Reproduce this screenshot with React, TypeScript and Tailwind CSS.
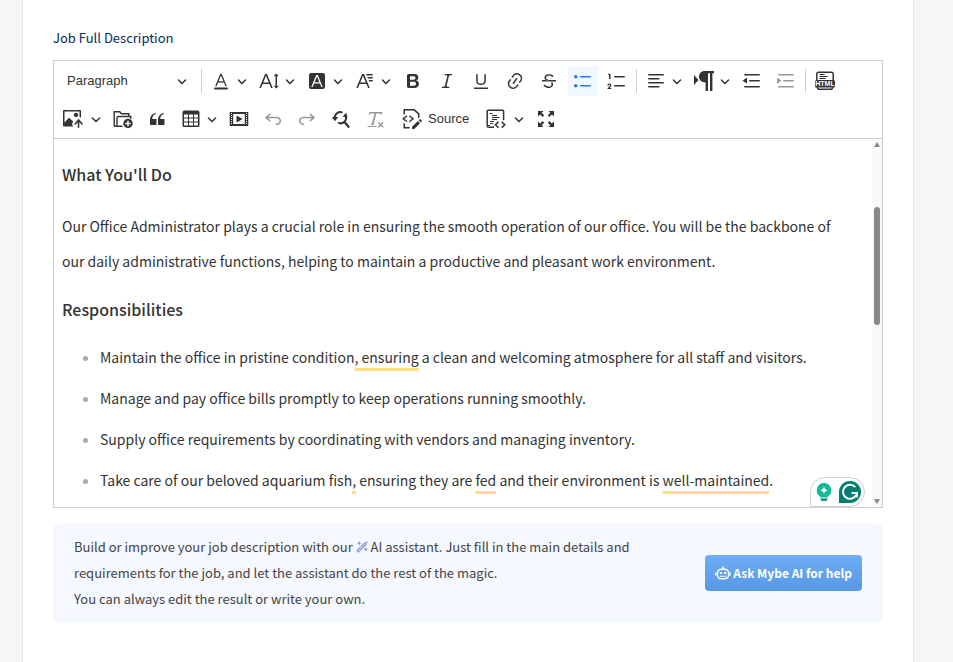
import type { ReactNode } from 'react';

const paths = {
  fontColor:
    'M12.4 10.3 10 4.5l-2.4 5.8h4.8zm.5 1.2H7.1L5.7 15H4.2l5-12h1.6l5 12h-1.5L13 11.5zm3.1 7H4a1 1 0 0 1 0-2h12a1 1 0 0 1 0 2z',
  fontSize:
    'M9.816 11.5 7.038 4.785 4.261 11.5h5.555Zm.62 1.5H3.641l-1.666 4.028H.312l5.789-14h1.875l5.789 14h-1.663L10.436 13Zm7.55 2.279.779-.779.707.707-2.265 2.265-2.193-2.265.707-.707.765.765V4.825c0-.042 0-.083.002-.123l-.77.77-.707-.707L17.207 2.5l2.265 2.265-.707.707-.782-.782c.002.043.003.089.003.135v10.454Z',
  fontFamily:
    'M11.03 3h6.149a.75.75 0 1 1 0 1.5h-5.514L11.03 3zm1.27 3h4.879a.75.75 0 1 1 0 1.5h-4.244L12.3 6zm1.27 3h3.609a.75.75 0 1 1 0 1.5h-2.973L13.57 9zm-2.754 2.5L8.038 4.785 5.261 11.5h5.555zm.62 1.5H4.641l-1.666 4.028H1.312l5.789-14h1.875l5.789 14h-1.663L11.436 13z',
  fontBackground:
    'M4 2h12a2 2 0 0 1 2 2v12a2 2 0 0 1-2 2H4a2 2 0 0 1-2-2V4a2 2 0 0 1 2-2zm8.38 9.262H7.62L10 5.506l2.38 5.756zm.532 1.285L14.34 16h1.426L10.804 4H9.196L4.234 16H5.66l1.428-3.453h5.824z',
  bold: 'M10.187 17H5.773c-.637 0-1.092-.138-1.364-.415-.273-.277-.409-.718-.409-1.323V4.738c0-.617.14-1.062.419-1.332.279-.27.73-.406 1.354-.406h4.68c.69 0 1.288.041 1.793.124.506.083.96.242 1.36.478.341.197.644.447.906.75a3.262 3.262 0 0 1 .808 2.162c0 1.401-.722 2.426-2.167 3.075C15.05 10.175 16 11.315 16 13.01a3.756 3.756 0 0 1-2.296 3.504 6.1 6.1 0 0 1-1.517.377c-.571.073-1.238.11-2 .11zm-.217-6.217H7v4.087h3.069c1.977 0 2.965-.69 2.965-2.072 0-.707-.256-1.22-.768-1.537-.512-.319-1.277-.478-2.296-.478zM7 5.13v3.619h2.606c.729 0 1.292-.067 1.69-.2a1.6 1.6 0 0 0 .91-.765c.165-.267.247-.566.247-.897 0-.707-.26-1.176-.778-1.409-.519-.232-1.31-.348-2.375-.348H7z',
  italic:
    'm9.586 14.633.021.004c-.036.335.095.655.393.962.082.083.173.15.274.201h1.474a.6.6 0 1 1 0 1.2H5.304a.6.6 0 0 1 0-1.2h1.15c.474-.07.809-.182 1.005-.334.157-.122.291-.32.404-.597l2.416-9.55a1.053 1.053 0 0 0-.281-.823 1.12 1.12 0 0 0-.442-.296H8.15a.6.6 0 0 1 0-1.2h6.443a.6.6 0 1 1 0 1.2h-1.195c-.376.056-.65.155-.823.296-.215.175-.423.439-.623.79l-2.366 9.347z',
  underline:
    'M3 18v-1.5h14V18zM5.2 10V3.6c0-.4.4-.6.8-.6.3 0 .7.2.7.6v6.2c0 2 1.3 2.8 3.2 2.8 1.9 0 3.4-.9 3.4-2.9V3.6c0-.3.4-.5.8-.5.3 0 .7.2.7.5V10c0 2.7-2.2 4-4.9 4-2.6 0-4.7-1.2-4.7-4z',
  link: 'm11.077 15 .991-1.416a.75.75 0 1 1 1.229.86l-1.148 1.64a.748.748 0 0 1-.217.206 5.251 5.251 0 0 1-8.503-5.955.741.741 0 0 1 .12-.274l1.147-1.639a.75.75 0 1 1 1.228.86L4.933 10.7l.006.003a3.75 3.75 0 0 0 6.132 4.294l.006.004zm5.494-5.335a.748.748 0 0 1-.12.274l-1.147 1.639a.75.75 0 1 1-1.228-.86l.86-1.23a3.75 3.75 0 0 0-6.144-4.301l-.86 1.229a.75.75 0 0 1-1.229-.86l1.148-1.64a.748.748 0 0 1 .217-.206 5.251 5.251 0 0 1 8.503 5.955zm-4.563-2.532a.75.75 0 0 1 .184 1.045l-3.155 4.505a.75.75 0 1 1-1.229-.86l3.155-4.506a.75.75 0 0 1 1.045-.184z',
  strike:
    'M7 16.4c-.8-.4-1.5-.9-2.2-1.5a.6.6 0 0 1-.2-.5l.3-.6h1c1 1.2 2.1 1.7 3.7 1.7 1 0 1.8-.3 2.3-.6.6-.4.6-1.2.6-1.3.2-1.2-.9-2.1-.9-2.1h2.1c.3.7.4 1.2.4 1.7v.8l-.6 1.2c-.6.8-1.1 1-1.6 1.2a6 6 0 0 1-2.4.6c-1 0-1.8-.3-2.5-.6zM6.8 9 6 8.3c-.4-.5-.5-.8-.5-1.6 0-.7.1-1.3.5-1.8.4-.6 1-1 1.6-1.3a6.3 6.3 0 0 1 4.7 0 4 4 0 0 1 1.7 1l.3.7c0 .1.2.4-.2.7-.4.2-.9.1-1 0a3 3 0 0 0-1.2-1c-.4-.2-1-.3-2-.4-.7 0-1.4.2-2 .6-.8.6-1 .8-1 1.5 0 .8.5 1 1.2 1.5.6.4 1.1.7 1.9 1H6.8zM3 10.5V9h14v1.5z',
  bullets:
    'M7 5.75c0 .414.336.75.75.75h9.5a.75.75 0 1 0 0-1.5h-9.5a.75.75 0 0 0-.75.75zm-6 0C1 4.784 1.777 4 2.75 4c.966 0 1.75.777 1.75 1.75 0 .966-.777 1.75-1.75 1.75C1.784 7.5 1 6.723 1 5.75zm6 9c0 .414.336.75.75.75h9.5a.75.75 0 1 0 0-1.5h-9.5a.75.75 0 0 0-.75.75zm-6 0c0-.966.777-1.75 1.75-1.75.966 0 1.75.777 1.75 1.75 0 .966-.777 1.75-1.75 1.75-.966 0-1.75-.777-1.75-1.75z',
  numbers:
    'M7 5.75c0 .414.336.75.75.75h9.5a.75.75 0 1 0 0-1.5h-9.5a.75.75 0 0 0-.75.75zM3.5 3v5H2V3.7H1v-1h2.5V3zM.343 17.857l2.59-3.257H2.92a.6.6 0 1 0-1.04 0H.302a2 2 0 1 1 3.995 0h-.001c-.048.405-.16.734-.333.988-.175.254-.59.692-1.244 1.312H4.3v1h-4l.043-.043zM7 14.75a.75.75 0 0 1 .75-.75h9.5a.75.75 0 1 1 0 1.5h-9.5a.75.75 0 0 1-.75-.75z',
  align:
    'M2 3.75c0 .414.336.75.75.75h14.5a.75.75 0 1 0 0-1.5H2.75a.75.75 0 0 0-.75.75zm0 8c0 .414.336.75.75.75h14.5a.75.75 0 1 0 0-1.5H2.75a.75.75 0 0 0-.75.75zm0 4c0 .414.336.75.75.75h9.929a.75.75 0 1 0 0-1.5H2.75a.75.75 0 0 0-.75.75zm0-8c0 .414.336.75.75.75h9.929a.75.75 0 1 0 0-1.5H2.75a.75.75 0 0 0-.75.75z',
  direction: 'M0 4v10l4.5-5zM10.5 0H20v2.3h-1.6V20H16V2.3h-2V20h-2.4v-8.5C7.8 11.5 5 9.3 5 5.8 5 2.3 7.5 0 10.5 0z',
  outdent:
    'M2 3.75c0 .414.336.75.75.75h14.5a.75.75 0 1 0 0-1.5H2.75a.75.75 0 0 0-.75.75zm5 6c0 .414.336.75.75.75h9.5a.75.75 0 1 0 0-1.5h-9.5a.75.75 0 0 0-.75.75zM2.75 16.5h14.5a.75.75 0 1 0 0-1.5H2.75a.75.75 0 1 0 0 1.5zm1.618-9.55L.98 9.358a.4.4 0 0 0 .013.661l3.39 2.207A.4.4 0 0 0 5 11.892V7.275a.4.4 0 0 0-.632-.326z',
  indent:
    'M2 3.75c0 .414.336.75.75.75h14.5a.75.75 0 1 0 0-1.5H2.75a.75.75 0 0 0-.75.75zm5 6c0 .414.336.75.75.75h9.5a.75.75 0 1 0 0-1.5h-9.5a.75.75 0 0 0-.75.75zM2.75 16.5h14.5a.75.75 0 1 0 0-1.5H2.75a.75.75 0 1 0 0 1.5zM1.632 6.95 5.02 9.358a.4.4 0 0 1-.013.661l-3.39 2.207A.4.4 0 0 1 1 11.892V7.275a.4.4 0 0 1 .632-.326z',
  image:
    'M1.201 1C.538 1 0 1.47 0 2.1v14.363c0 .64.534 1.037 1.186 1.037h9.494a2.97 2.97 0 0 1-.414-.287 2.998 2.998 0 0 1-1.055-2.03 3.003 3.003 0 0 1 .693-2.185l.383-.455-.02.018-3.65-3.41a.695.695 0 0 0-.957-.034L1.5 13.6V2.5h15v5.535a2.97 2.97 0 0 1 1.412.932l.088.105V2.1c0-.63-.547-1.1-1.2-1.1H1.202Zm11.713 2.803a2.146 2.146 0 0 0-2.049 1.992 2.14 2.14 0 0 0 1.28 2.096 2.13 2.13 0 0 0 2.644-3.11 2.134 2.134 0 0 0-1.875-.978ZM15.522 19.1a.79.79 0 0 0 .79-.79v-5.373l2.059 2.455a.79.79 0 1 0 1.211-1.015l-3.352-3.995a.79.79 0 0 0-.995-.179.784.784 0 0 0-.299.221l-3.35 3.99a.79.79 0 1 0 1.21 1.017l1.936-2.306v5.185c0 .436.353.79.79.79Z',
  quote:
    'M3 10.423a6.5 6.5 0 0 1 6.056-6.408l.038.67C6.448 5.423 5.354 7.663 5.22 10H9c.552 0 .5.432.5.986v4.511c0 .554-.448.503-1 .503h-5c-.552 0-.5-.449-.5-1.003v-4.574zm8 0a6.5 6.5 0 0 1 6.056-6.408l.038.67c-2.646.739-3.74 2.979-3.873 5.315H17c.552 0 .5.432.5.986v4.511c0 .554-.448.503-1 .503h-5c-.552 0-.5-.449-.5-1.003v-4.574z',
  table:
    'M3 5.5v3h4v-3H3zm0 4v3h4v-3H3zm0 4v3h4v-3H3zm5 3h4v-3H8v3zm5 0h4v-3h-4v3zm4-4v-3h-4v3h4zm0-4v-3h-4v3h4zm1.5 8A1.5 1.5 0 0 1 17 18H3a1.5 1.5 0 0 1-1.5-1.5V3c.222-.863 1.068-1.5 2-1.5h13c.932 0 1.778.637 2 1.5v13.5zM12 12.5v-3H8v3h4zm0-4v-3H8v3h4z',
  media:
    'M18.68 3.03c.6 0 .59-.03.59.55v12.84c0 .59.01.56-.59.56H1.29c-.6 0-.59.03-.59-.56V3.58c0-.58-.01-.55.6-.55h17.38zM15.77 15V5H4.2v10h11.57zM2 4v1h1V4H2zm0 2v1h1V6H2zm0 2v1h1V8H2zm0 2v1h1v-1H2zm0 2v1h1v-1H2zm0 2v1h1v-1H2zM17 4v1h1V4h-1zm0 2v1h1V6h-1zm0 2v1h1V8h-1zm0 2v1h1v-1h-1zm0 2v1h1v-1h-1zm0 2v1h1v-1h-1zM7.5 7.177a.4.4 0 0 1 .593-.351l5.133 2.824a.4.4 0 0 1 0 .7l-5.133 2.824a.4.4 0 0 1-.593-.35V7.176z',
  undo: 'm5.042 9.367 2.189 1.837a.75.75 0 0 1-.965 1.149l-3.788-3.18a.747.747 0 0 1-.21-.284.75.75 0 0 1 .17-.945L6.23 4.762a.75.75 0 1 1 .964 1.15L4.863 7.866h8.917A.75.75 0 0 1 14 7.9a4 4 0 1 1-1.477 7.718l.344-1.489a2.5 2.5 0 1 0 1.094-4.73l.008-.032H5.042z',
  removeFormat:
    'M8.69 14.915c.053.052.173.083.36.093a.366.366 0 0 1 .345.485l-.003.01a.738.738 0 0 1-.697.497h-2.67a.374.374 0 0 1-.353-.496l.013-.038a.681.681 0 0 1 .644-.458c.197-.012.325-.043.386-.093a.28.28 0 0 0 .072-.11L9.592 4.5H6.269c-.359-.017-.609.013-.75.09-.142.078-.289.265-.442.563-.192.29-.516.464-.864.464H4.17a.43.43 0 0 1-.407-.569L4.46 3h13.08l-.62 2.043a.81.81 0 0 1-.775.574h-.114a.486.486 0 0 1-.486-.486c.001-.284-.054-.464-.167-.54-.112-.076-.367-.106-.766-.091h-3.28l-2.68 10.257c-.006.074.007.127.038.158zM3 17h8a.5.5 0 1 1 0 1H3a.5.5 0 1 1 0-1zm11.299 1.17a.75.75 0 1 1-1.06-1.06l1.414-1.415-1.415-1.414a.75.75 0 0 1 1.06-1.06l1.415 1.414 1.414-1.415a.75.75 0 0 1 1.06 1.06l-1.413 1.415 1.414 1.415a.75.75 0 0 1-1.06 1.06l-1.415-1.414-1.414 1.414z',
  source:
    'm12.5 0 5 4.5v4L16 9.428l-.004-4.22-4.222-3.692L3 1.5v3.25l-1.5 1V0h11zM1.5 13.75l1.5 1v3.254L7.685 18v1.504H1.5zM4.06 6.64a.75.75 0 0 1 .958 1.15l-.085.07L2.29 9.75l2.646 1.89c.302.216.4.62.232.951l-.058.095a.75.75 0 0 1-.951.232l-.095-.058-3.5-2.5V9.14l3.496-2.5zm4.194 6.22a.75.75 0 0 1-.958-1.149l.085-.07 2.643-1.89-2.646-1.89a.75.75 0 0 1-.232-.952l.058-.095a.75.75 0 0 1 .95-.232l.096.058 3.5 2.5v1.22l-3.496 2.5zm7.644-.836 2.122 2.122-5.825 5.809-2.125-.005.003-2.116zm2.539-1.847 1.414 1.414a.5.5 0 0 1 0 .707l-1.06 1.06-2.122-2.12 1.061-1.061a.5.5 0 0 1 .707 0z',
  fullscreen:
    'M2 2h5.500L5.700 3.800l2.500 2.500-1.600 1.600-2.500-2.500L2 7.500zM18 2v5.500l-2.100-2.100-2.500 2.500-1.600-1.600 2.500-2.500L12.500 2zM2 18v-5.500l2.100 2.100 2.500-2.500 1.600 1.600-2.500 2.500L7.500 18zM18 18h-5.500l1.800-1.800-2.500-2.500 1.600-1.600 2.500 2.500 2.100-2.100z',
};

const Icon = ({ d, children, flip }: { d?: string; children?: ReactNode; flip?: boolean }) => (
  <svg viewBox="0 0 20 20" className={`size-5 shrink-0 fill-current ${flip ? '-scale-x-100' : ''}`} aria-hidden="true">
    {d ? <path fillRule="evenodd" d={d} /> : children}
  </svg>
);

const Chevron = () => (
  <svg viewBox="0 0 10 10" className="size-2.5 shrink-0 fill-current" aria-hidden="true">
    <path d="M.941 4.523a.75.75 0 1 1 1.06-1.06l3.006 3.005 3.005-3.005a.75.75 0 1 1 1.06 1.06l-3.549 3.55a.75.75 0 0 1-1.168-.136L.941 4.523z" />
  </svg>
);

const FolderIcon = () => (
  <Icon>
    <path
      fill="none"
      stroke="currentColor"
      strokeWidth="1.4"
      d="M9.5 17.3H2.2a1 1 0 0 1-1-1V2.7h5.6l1.6 2h7.4v2.5M4 17V9.2c0-1 .6-1.7 1.6-1.7h12.2V10"
    />
    <circle cx="15" cy="14.5" r="4.7" />
    <path fill="none" stroke="white" strokeWidth="1.5" d="M15 11.8v5.4M12.3 14.5h5.4" />
  </Icon>
);

const FindIcon = () => (
  <Icon>
    <path fill="none" stroke="currentColor" strokeWidth="2" d="M4 9.5A5.3 5.3 0 0 1 11.5 3.7M14.3 6.3a5.3 5.3 0 0 1-7.3 7.2" />
    <path fill="none" stroke="currentColor" strokeWidth="2.2" strokeLinecap="round" d="m13.5 13 4 4.8" />
    <path d="M.8 8h6.4L4 12.2zM11.6 7.7l4.9.7-1.3-4.9z" />
  </Icon>
);

const TemplateIcon = () => (
  <Icon>
    <path
      fill="none"
      stroke="currentColor"
      strokeWidth="1.5"
      d="M8 18.3H2.8c-.9 0-1.6-.7-1.6-1.6V2.2a1 1 0 0 1 1-1h14.4a1 1 0 0 1 1 1v9"
    />
    <path stroke="currentColor" d="M1.5 16.5H4M3.5 4.500h3M6 6.500h5M6 8.500h7.500M6 10.500h5M4 12.500h4M4 14.500h3" />
    <path fill="none" stroke="currentColor" strokeWidth="1.6" d="m12.5 12.7-3 3 3 3M15.7 12.7l3 3-3 3" />
  </Icon>
);

const HtmlIcon = () => (
  <Icon>
    <path
      fill="none"
      stroke="currentColor"
      strokeWidth="1.5"
      d="M1.8 9V3a1.8 1.8 0 0 1 1.8-1.8h12.8A1.8 1.8 0 0 1 18.2 3v6M2 16l1.2 2.2h13.6L18 16"
    />
    <path stroke="currentColor" d="M4.5 3.5h5M4.5 5.5h8M4.5 7.5h6" />
    <rect y="9" width="20" height="7.5" rx="1.5" />
    <text x="10" y="15.2" textAnchor="middle" fill="white" className="font-['Liberation_Sans',sans-serif] text-[7px] font-bold">
      HTML
    </text>
  </Icon>
);

const WandIcon = () => (
  <svg viewBox="0 0 24 24" className="inline size-3 align-[-1px] text-[#8b93dc]" aria-hidden="true">
    <path
      fill="none"
      stroke="currentColor"
      strokeWidth="2.4"
      strokeLinejoin="round"
      d="M1.8 19.5 17 4.3l2.7 2.7L4.5 22.2zM13 8.500l2.7 2.7"
    />
    <path
      fill="currentColor"
      d="m6.5 0 1.4 3.1L11 4.5 7.900 5.900 6.500 9 5.100 5.900 2 4.500l3.100-1.400zM20.800 0l1 2.200 2.200 1-2.200 1-1 2.200-1-2.200-2.200-1 2.200-1zM19.500 12l1.400 3.100 3.100 1.400-3.100 1.400-1.400 3.100-1.400-3.100-3.100-1.400 3.100-1.400z"
    />
  </svg>
);

const BotIcon = () => (
  <svg viewBox="0 0 16 16" className="size-4" aria-hidden="true">
    <g fill="none" stroke="currentColor" strokeWidth="1.5">
      <rect x="2.4" y="4.2" width="11.2" height="9.6" rx="4" />
      <path d="M8 1.5V4M1 7.5v3M15 7.5v3" />
      <path strokeWidth="1.2" d="M5 11.4h6" strokeDasharray="1.5 .7" />
    </g>
    <path fill="currentColor" d="M4.8 7h2v2h-2zM9.2 7h2v2h-2z" />
  </svg>
);

type ToolProps = { label: string; icon: ReactNode; disabled?: boolean; active?: boolean };

const Tool = ({ label, icon, disabled, active }: ToolProps) => (
  <button
    type="button"
    aria-label={label}
    aria-pressed={active}
    disabled={disabled}
    className={`flex size-[30px] items-center justify-center rounded-xs disabled:opacity-50 ${
      active ? 'bg-[#f0f7ff] text-[#2977ff]' : 'hover:bg-gray-100'
    }`}
  >
    {icon}
  </button>
);

const DropTool = ({ label, icon, split }: ToolProps & { split?: boolean }) => (
  <button
    type="button"
    aria-label={label}
    aria-haspopup="menu"
    className={`flex h-[30px] items-center justify-between rounded-xs pr-[3px] pl-[5px] hover:bg-gray-100 ${
      split ? 'w-[46px]' : 'w-11'
    }`}
  >
    {icon}
    <Chevron />
  </button>
);

const Separator = () => <span className="my-[3px] w-px self-stretch bg-[#ccced1]" />;

const Toolbar = () => (
  <div role="toolbar" aria-label="Editor toolbar" className="border border-[#ccced1] px-1 pt-[5px] pb-1 text-[#333]">
    <div className="flex items-center gap-1">
      <div className="flex h-[30px] w-[139px] items-center pr-2.5">
        <select
          aria-label="Heading"
          className="h-full min-w-0 flex-1 appearance-none bg-transparent pl-[9px] font-['Liberation_Sans',sans-serif] text-[13px] outline-none"
        >
          <option>Paragraph</option>
        </select>
        <Chevron />
      </div>
      <Separator />
      <DropTool label="Font color" icon={<Icon d={paths.fontColor} />} />
      <DropTool label="Font size" icon={<Icon d={paths.fontSize} />} />
      <DropTool label="Font background" icon={<Icon d={paths.fontBackground} />} />
      <DropTool label="Font family" icon={<Icon d={paths.fontFamily} />} />
      <Tool label="Bold" icon={<Icon d={paths.bold} />} />
      <Tool label="Italic" icon={<Icon d={paths.italic} />} />
      <Tool label="Underline" icon={<Icon d={paths.underline} />} />
      <Tool label="Link" icon={<Icon d={paths.link} />} />
      <Tool label="Strikethrough" icon={<Icon d={paths.strike} />} />
      <Tool label="Bulleted list" icon={<Icon d={paths.bullets} />} active />
      <Tool label="Numbered list" icon={<Icon d={paths.numbers} />} />
      <Separator />
      <DropTool label="Text alignment" icon={<Icon d={paths.align} />} />
      <DropTool label="Text direction" icon={<Icon d={paths.direction} />} />
      <Tool label="Decrease indent" icon={<Icon d={paths.outdent} />} />
      <Tool label="Increase indent" icon={<Icon d={paths.indent} />} disabled />
      <Separator />
      <Tool label="Insert HTML" icon={<HtmlIcon />} />
    </div>
    <div className="mt-2 flex items-center gap-1">
      <DropTool label="Upload image" icon={<Icon d={paths.image} />} split />
      <Tool label="Open file manager" icon={<FolderIcon />} />
      <Tool label="Block quote" icon={<Icon d={paths.quote} />} />
      <DropTool label="Insert table" icon={<Icon d={paths.table} />} />
      <Tool label="Insert media" icon={<Icon d={paths.media} />} />
      <Tool label="Undo" icon={<Icon d={paths.undo} />} disabled />
      <Tool label="Redo" icon={<Icon d={paths.undo} flip />} disabled />
      <Tool label="Find and replace" icon={<FindIcon />} />
      <Tool label="Remove format" icon={<Icon d={paths.removeFormat} />} disabled />
      <button
        type="button"
        className="flex h-[30px] items-center gap-1.5 rounded-xs px-2 font-['Liberation_Sans',sans-serif] text-[13px] hover:bg-gray-100"
      >
        <Icon d={paths.source} />
        Source
      </button>
      <DropTool label="Insert template" icon={<TemplateIcon />} split />
      <Tool label="Fullscreen" icon={<Icon d={paths.fullscreen} />} />
    </div>
  </div>
);

// Grammar suggestion
const Hint = ({ children }: { children: ReactNode }) => (
  <span className="underline decoration-[#ffdf80] decoration-[3px] underline-offset-[5px] [text-decoration-skip-ink:none]">
    {children}
  </span>
);

const duties = [
  <>
    Maintain the office in pristine condition<Hint>, ensuring</Hint> a clean and welcoming atmosphere for all staff and
    visitors.
  </>,
  <>Manage and pay office bills promptly to keep operations running smoothly.</>,
  <>Supply office requirements by coordinating with vendors and managing inventory.</>,
  <>
    Take care of our beloved aquarium fish<Hint>,</Hint> ensuring they are <Hint>fed</Hint> and their environment is{' '}
    <Hint>well-maintained</Hint>.
  </>,
];

const Scrollbar = () => (
  <div className="flex w-2.5 shrink-0 flex-col items-center bg-[#fafafa] py-[3px]" aria-hidden="true">
    <span className="border-x-[3px] border-b-[5px] border-x-transparent border-b-[#888]" />
    <span className="mt-[60px] h-[118px] w-1.5 rounded-full bg-[#888]" />
    <span className="mt-auto border-x-[3px] border-t-[5px] border-x-transparent border-t-[#888]" />
  </div>
);

const GrammarBadge = () => (
  <div className="absolute right-[17px] bottom-0 flex h-[30px] w-[55px] items-center justify-center gap-1.5 rounded-tl-[15px] rounded-r-[15px] border border-[#cdd0e3] bg-white">
    <svg viewBox="0 0 18 20" className="h-5 w-[18px]" aria-hidden="true">
      <path
        fill="#12b897"
        d="M9 1a7.3 7.3 0 0 0-4.5 13c.5.4.8.9.8 1.5h7.4c0-.6.3-1.1.8-1.5A7.3 7.3 0 0 0 9 1z"
      />
      <path fill="#0e8f7b" d="M5.3 16.5h7.4c0 1.6-1 2.5-2.2 2.5h-3c-1.2 0-2.2-.9-2.2-2.5z" />
      <path fill="white" d="M9 4.3c.5 2.6 1.4 3.5 4 4-2.6.5-3.5 1.4-4 4-.5-2.6-1.4-3.5-4-4 2.6-.5 3.5-1.4 4-4z" />
    </svg>
    <svg viewBox="0 0 22 22" className="size-[22px]" aria-hidden="true">
      <path fill="#027e6f" d="M11 0a11 11 0 1 1 0 22H0V11A11 11 0 0 1 11 0z" />
      <path fill="none" stroke="white" strokeWidth="2" d="M16.3 6.2A7 7 0 1 0 17.9 12h-5.400M17.900 11.500v5" />
    </svg>
  </div>
);

const App = () => (
  <div className="min-h-screen bg-[#f5f6f8] pr-[39px] pl-[22px] font-['Noto_Sans_CJK_SC',sans-serif]">
    <main className="min-h-screen border-x border-[#e5e6ed] bg-white px-[30px] pt-[26px] pb-10">
      <h2 id="description-label" className="text-[13px] leading-6 text-[#032d60]">
        Job Full Description
      </h2>

      <section className="mt-2.5">
        <Toolbar />
        <div className="relative flex h-[369px] border border-t-0 border-[#ccced1]">
          <div
            role="textbox"
            aria-multiline="true"
            aria-labelledby="description-label"
            contentEditable
            suppressContentEditableWarning
            spellCheck={false}
            className="min-w-0 flex-1 overflow-hidden pt-[19px] pr-6 pl-2 text-sm text-[#333] outline-none"
          >
            <h3 className="text-base leading-8 font-medium">What You'll Do</h3>
            <p className="mt-[19px] leading-[35px]">
              Our Office Administrator plays a crucial role in ensuring the smooth operation of our office. You will be
              the backbone of our daily administrative functions, helping to maintain a productive and pleasant work
              environment.
            </p>
            <h3 className="mt-3.5 text-base leading-8 font-medium">Responsibilities</h3>
            <ul className="mt-3 list-disc pl-[38px] marker:text-[#aaa]">
              {duties.map((duty, i) => (
                <li key={i} className="leading-[41px]">
                  {duty}
                </li>
              ))}
            </ul>
          </div>
          <Scrollbar />
          <GrammarBadge />
        </div>
      </section>

      <section className="mt-[15px] flex items-center justify-between rounded-md bg-[#f5f8ff] px-[21px] py-[11px]">
        <p className="text-[13px] leading-[26px] text-[#444]">
          Build or improve your job description with our <WandIcon /> AI assistant. Just fill in the main details and
          <br className="max-md:hidden" /> requirements for the job, and let the assistant do the rest of the magic.
          <br />
          You can always edit the result or write your own.
        </p>
        <button
          type="button"
          className="flex h-9 shrink-0 items-center gap-0.5 rounded-sm bg-linear-to-b from-[#6eaef8] to-[#5897e3] px-2.5 text-xs font-bold text-white"
        >
          <BotIcon />
          Ask Mybe AI for help
        </button>
      </section>
    </main>
  </div>
);

export default App;
